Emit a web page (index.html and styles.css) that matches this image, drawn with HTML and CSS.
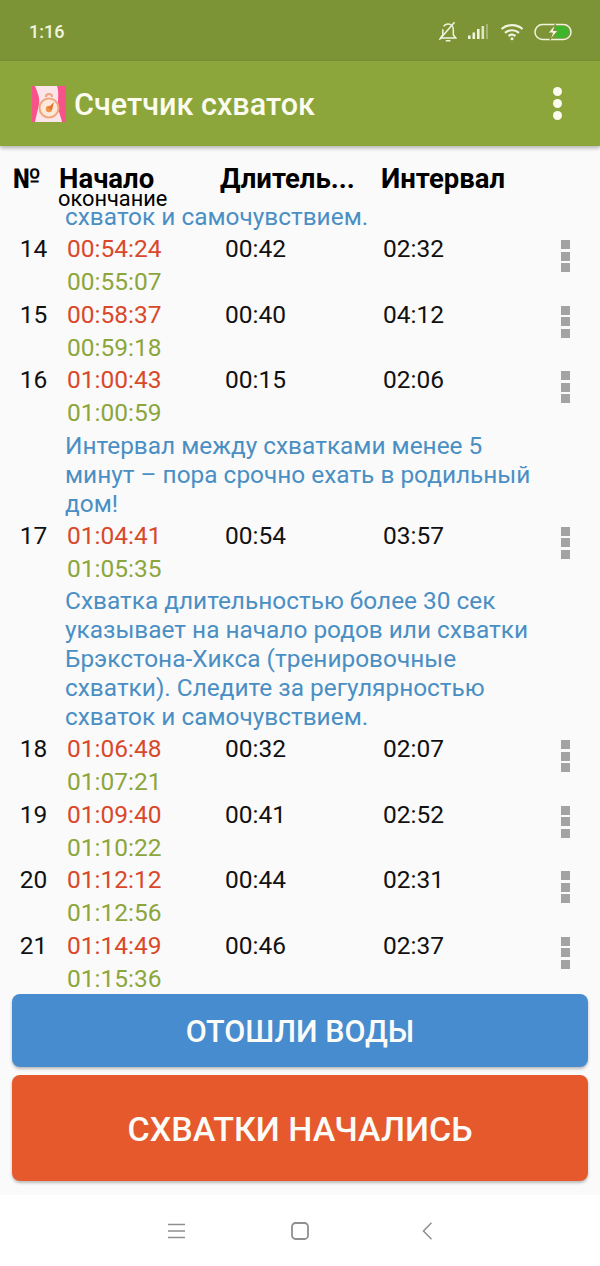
FILE: index.html
```html
<!DOCTYPE html>
<html lang="ru">
<head>
<meta charset="utf-8">
<title>Счетчик схваток</title>
<link rel="stylesheet" href="styles.css">
</head>
<body>
<div class="app">
  <div class="status">
    <span class="clock">1:16</span>
    <div class="status-icons">
      <svg class="ic-bell" viewBox="2 1 16 18" width="19" height="21" fill="none" stroke="#f0f4df" stroke-width="1.300"><path d="M4 15.500h13l-2-2.500V8.500c0-3-2-5-4.500-5-1.500 0-3 .8-3.800 2.200M6 8v5l-2 2.500M8.500 18h4"/><path d="M3 17 16 2"/></svg>
      <svg class="ic-signal" viewBox="0 0 20 15" width="22" height="15" fill="#f0f4df"><rect x="0" y="11.500" width="2.600" height="3.500"/><rect x="4.500" y="8.500" width="2.600" height="6.500"/><rect x="9" y="5" width="2.600" height="10"/><rect x="13.500" y="2" width="2.600" height="13" opacity=".85"/><rect x="18" y="0" width="2" height="15" opacity=".35"/></svg>
      <svg class="ic-wifi" viewBox="0 0 24 18" width="24" height="18" fill="none" stroke="#f0f4df" stroke-width="2.200"><path d="M1.500 6C7.500.8 16.500.8 22.500 6M5 9.800c4-3.400 10-3.400 14 0M8.500 13c2-1.500 5-1.500 7 0"/><circle cx="12" cy="15.800" r="1.500" fill="#f0f4df" stroke="none"/></svg>
      <svg class="ic-batt" viewBox="0 0 38 18" width="38" height="18"><rect x="1" y="1.500" width="36" height="15" rx="7.500" fill="none" stroke="#f0f4df" stroke-width="1.500"/><path d="M22 3h7a6 6 0 0 1 0 12h-7z" fill="#3fb52c"/><path d="M21.500 1 14 10h4.500L16 17l8-9.500h-4.500z" fill="#f0f4df" stroke="#7d9436"/></svg>
    </div>
  </div>
  <header class="toolbar">
    <svg class="logo" viewBox="0 0 34 36" width="34" height="36">
      <rect width="34" height="36" fill="#fbe4ea"/>
      <path d="M0 0h3c3 8 5 12 4 18s-3 12-4 18H0z" fill="#f7528a"/>
      <path d="M34 0h-9c2 6 1 10 1 18s3 12 4 18h4z" fill="#f7528a"/>
      <circle cx="17" cy="22" r="9.500" fill="#fde8dc" stroke="#f0a77c" stroke-width="2"/>
      <path d="M14 11a3 3 0 0 1 6 0" fill="none" stroke="#f0a77c" stroke-width="2.200"/>
      <circle cx="17" cy="23" r="3.200" fill="#ee9448"/>
      <path d="M16 22l6-6-2 8z" fill="#e8752f"/>
    </svg>
    <h1 class="title">Счетчик схваток</h1>
    <div class="overflow"><i></i><i></i><i></i></div>
  </header>
  <div class="head">
    <div class="h-no">№</div>
    <div class="h-start">Начало<small>окончание</small></div>
    <div class="h-dur">Длитель...</div>
    <div class="h-int">Интервал</div>
  </div>
  <div class="list">
    <div class="list-inner">
      <p class="note">схваток и самочувствием.</p>
      <div class="row"><div class="no">14</div><div class="times"><span class="t-start">00:54:24</span><span class="t-end">00:55:07</span></div><div>00:42</div><div>02:32</div><div class="dots"><i></i><i></i><i></i></div></div>
      <div class="row"><div class="no">15</div><div class="times"><span class="t-start">00:58:37</span><span class="t-end">00:59:18</span></div><div>00:40</div><div>04:12</div><div class="dots"><i></i><i></i><i></i></div></div>
      <div class="row"><div class="no">16</div><div class="times"><span class="t-start">01:00:43</span><span class="t-end">01:00:59</span></div><div>00:15</div><div>02:06</div><div class="dots"><i></i><i></i><i></i></div></div>
      <p class="note">Интервал между схватками менее 5 минут – пора срочно ехать в родильный дом!</p>
      <div class="row"><div class="no">17</div><div class="times"><span class="t-start">01:04:41</span><span class="t-end">01:05:35</span></div><div>00:54</div><div>03:57</div><div class="dots"><i></i><i></i><i></i></div></div>
      <p class="note">Схватка длительностью более 30 сек указывает на начало родов или схватки Брэкстона-Хикса (тренировочные схватки). Следите за регулярностью схваток и самочувствием.</p>
      <div class="row"><div class="no">18</div><div class="times"><span class="t-start">01:06:48</span><span class="t-end">01:07:21</span></div><div>00:32</div><div>02:07</div><div class="dots"><i></i><i></i><i></i></div></div>
      <div class="row"><div class="no">19</div><div class="times"><span class="t-start">01:09:40</span><span class="t-end">01:10:22</span></div><div>00:41</div><div>02:52</div><div class="dots"><i></i><i></i><i></i></div></div>
      <div class="row"><div class="no">20</div><div class="times"><span class="t-start">01:12:12</span><span class="t-end">01:12:56</span></div><div>00:44</div><div>02:31</div><div class="dots"><i></i><i></i><i></i></div></div>
      <div class="row"><div class="no">21</div><div class="times"><span class="t-start">01:14:49</span><span class="t-end">01:15:36</span></div><div>00:46</div><div>02:37</div><div class="dots"><i></i><i></i><i></i></div></div>
    </div>
  </div>
  <div class="actions">
    <button class="btn btn-water">ОТОШЛИ ВОДЫ</button>
    <button class="btn btn-start">СХВАТКИ НАЧАЛИСЬ</button>
  </div>
  <nav class="navbar">
    <svg viewBox="0 0 17 16" width="17" height="16" fill="none" stroke="#8f8f8f" stroke-width="1.400"><path d="M0 1.500h17M0 8h17M0 14.500h17"/></svg>
    <svg viewBox="0 0 18 18" width="18" height="18" fill="none" stroke="#8f8f8f" stroke-width="1.800"><rect x="1" y="1" width="16" height="16" rx="3.500"/></svg>
    <svg viewBox="0 0 10 18" width="10" height="18" fill="none" stroke="#8f8f8f" stroke-width="1.500"><path d="M9.500 .8 1.500 9l8 8.200"/></svg>
  </nav>
</div>
</body>
</html>
```
FILE: styles.css
```css
* { box-sizing: border-box; }
html, body { margin: 0; padding: 0; }
body { font-family: Roboto, "Liberation Sans", sans-serif; background: #fafafa; }
.app { width: 600px; height: 1266px; display: flex; flex-direction: column; overflow: hidden; }

.status { height: 61px; flex: none; background: #7d9436; display: flex; align-items: center; justify-content: space-between; padding: 2px 28px 0 29px; color: #f0f4df; }
.clock { font-size: 18px; font-weight: 500; }
.status-icons { display: flex; align-items: center; gap: 10.500px; }

.toolbar { height: 85px; flex: none; background: #8ca63c; display: flex; align-items: center; padding: 0 38.500px 0 32px; color: #fbfbf0; box-shadow: 0 2px 4px rgba(0,0,0,.3); position: relative; }
.logo { flex: none; }
.title { flex: 1; margin: 2px 0 0 8px; font-size: 30.600px; font-weight: 500; line-height: 36px; }
.overflow { display: flex; flex-direction: column; gap: 3.300px; }
.overflow i { display: block; width: 9px; height: 9px; border-radius: 50%; background: #fbfbf0; }

.head { height: 64px; flex: none; display: grid; grid-template-columns: 46.500px 161px 161px 1fr; padding: 19px 0 0 12.500px; color: #000; font-weight: 700; font-size: 27.500px; line-height: 27px; }
.h-start small { display: block; font-weight: 400; font-size: 21.800px; line-height: 14px; margin-left: -1px; }

.list { flex: none; height: 783px; overflow: hidden; }
.list-inner { margin-top: -10px; }
.note { margin: 0; padding: 2px 60px 1px 65px; font-size: 24.400px; line-height: 29px; color: #4a8fc4; }
.row { height: 65.500px; display: grid; grid-template-columns: 67px 158px 158px 1fr 70px; font-size: 24.500px; line-height: 33px; color: #111; }
.no { text-align: center; }
.times { display: flex; flex-direction: column; }
.t-start { color: #d9482b; }
.t-end { color: #8ca63c; }
.dots { display: flex; flex-direction: column; gap: 2.500px; padding: 8px 0 0 31px; }
.dots i { display: block; width: 9px; height: 9px; background: #a3a3a3; }

.actions { flex: none; height: 202px; display: flex; flex-direction: column; gap: 8px; padding: 1px 12px 0; }
.btn { border: 0; border-radius: 8px; color: #fbfbf8; font-family: inherit; font-weight: 500; box-shadow: 0 2px 3px rgba(0,0,0,.25); padding: 2px 0 0; }
.btn-water { height: 73px; background: #468cce; font-size: 30.500px; }
.btn-start { height: 106px; background: #e5592c; font-size: 34px; }

.navbar { flex: 1; background: #fff; display: grid; grid-template-columns: 123px 131px 10px; align-items: center; padding-left: 168px; }
```
